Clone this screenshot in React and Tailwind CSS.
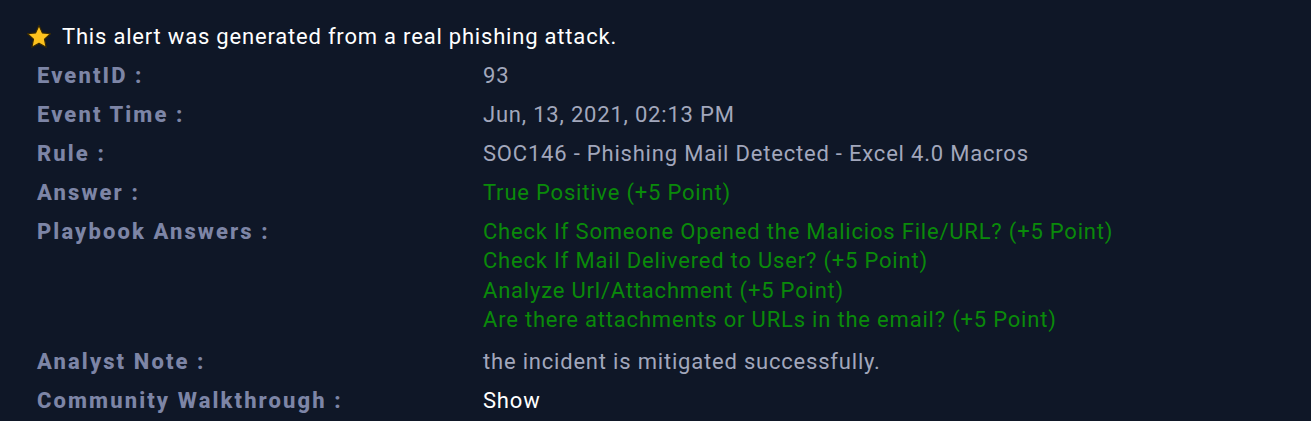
export default function App() {
  const rows = [
    { label: "EventID :", value: ["93"], tone: "grey" },
    { label: "Event Time :", value: ["Jun, 13, 2021, 02:13 PM"], tone: "grey" },
    { label: "Rule :", value: ["SOC146 - Phishing Mail Detected - Excel 4.0 Macros"], tone: "grey" },
    { label: "Answer :", value: ["True Positive (+5 Point)"], tone: "green" },
    {
      label: "Playbook Answers :",
      value: [
        "Check If Someone Opened the Malicios File/URL? (+5 Point)",
        "Check If Mail Delivered to User? (+5 Point)",
        "Analyze Url/Attachment (+5 Point)",
        "Are there attachments or URLs in the email? (+5 Point)",
      ],
      tone: "green",
    },
    { label: "Analyst Note :", value: ["the incident is mitigated successfully."], tone: "grey" },
    { label: "Community Walkthrough :", value: ["Show"], tone: "white" },
  ];

  const toneClass = {
    grey: "text-[#a2a7bc]",
    green: "text-[#0a8a0a]",
    white: "text-white",
  };

  return (
    <div
      className="min-h-[421px] w-full bg-[#0f1727] pl-[26px] pt-[24px]"
      style={{ fontFamily: "Roboto, 'Liberation Sans', sans-serif" }}
    >
      <div className="flex items-center gap-[10px] text-[22px] leading-[26px] tracking-[0.8px] text-white">
        <svg width="26" height="26" viewBox="0 0 24 24" className="shrink-0">
          <path
            d="M12 1.4l3.2 6.8 7.4.8-5.5 5.1 1.5 7.4L12 17.9l-6.6 3.6 1.5-7.4-5.5-5.1 7.4-.8z"
            fill="#fdc21d"
            stroke="#3a2a00"
            strokeWidth="1.1"
            strokeLinejoin="round"
          />
        </svg>
        <span>This alert was generated from a real phishing attack.</span>
      </div>
      <div className="mt-[11px] flex flex-col gap-[9.67px] pl-[11px]">
        {rows.map((r) => (
          <div key={r.label} className={`flex ${r.value.length > 1 ? "pb-[3px]" : ""}`}>
            <div className="w-[446px] shrink-0 text-[22px] font-extrabold leading-[29px] tracking-[2.1px] text-[#7d85a6]">
              {r.label}
            </div>
            <div className={`flex flex-col text-[22px] leading-[29.33px] tracking-[0.8px] ${toneClass[r.tone]}`}>
              {r.value.map((v) => (
                <span key={v}>{v}</span>
              ))}
            </div>
          </div>
        ))}
      </div>
    </div>
  );
}
